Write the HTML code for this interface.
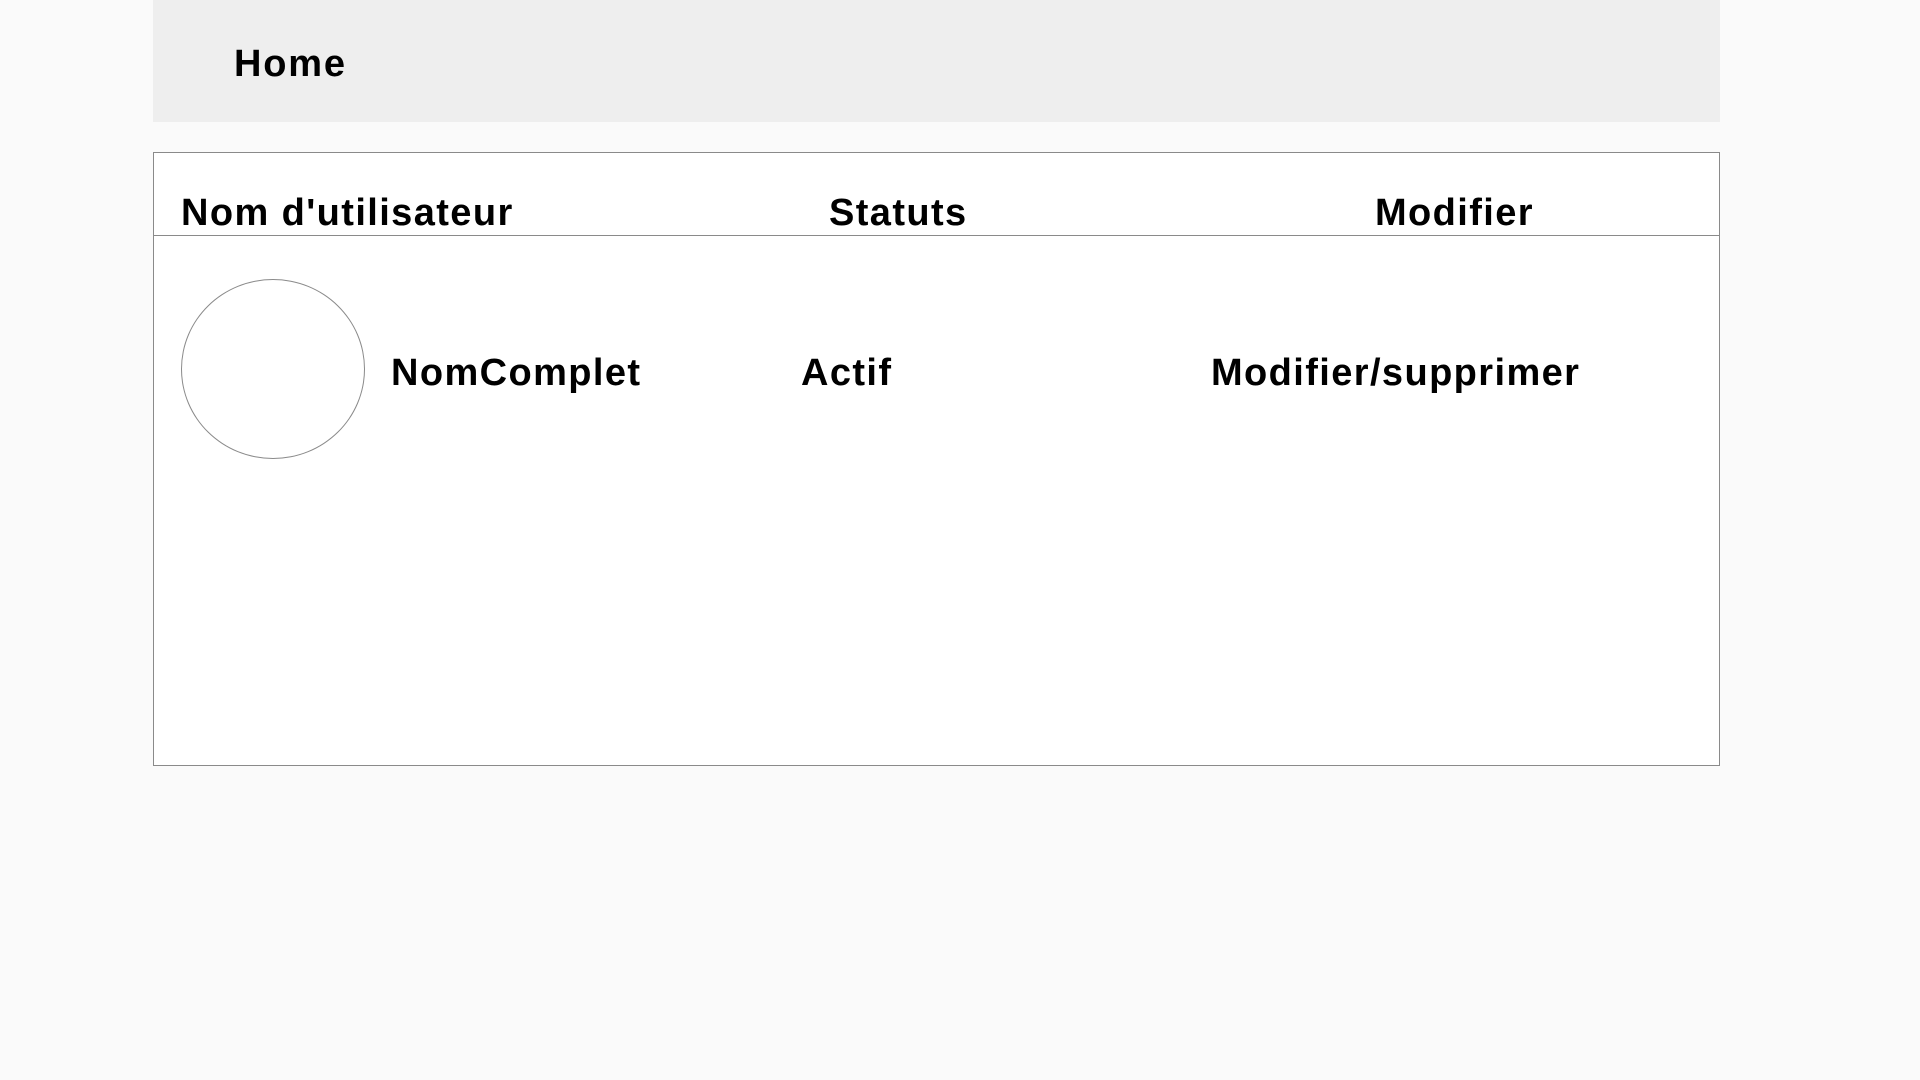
<!DOCTYPE html>
<html><head><meta charset="utf-8"><style>
html,body{margin:0;padding:0;width:1920px;height:1080px;background:#fafafa;overflow:hidden;font-family:"Liberation Sans",sans-serif;font-weight:bold;color:#000}
.hdr{position:absolute;left:153px;top:0;width:1567px;height:122px;background:#eeeeee}
.t{position:absolute;white-space:nowrap;line-height:1;letter-spacing:1.4px}
.box{position:absolute;left:153px;top:152px;width:1565px;height:612px;border:1px solid #8a8a8a;background:#fff}
.line{position:absolute;left:153px;top:235px;width:1567px;height:1px;background:#8a8a8a}
.circ{position:absolute;left:181px;top:279px;width:184px;height:180px;border:1px solid #8a8a8a;border-radius:50%;box-sizing:border-box}
</style></head><body>
<div class="hdr"></div>
<div class="t" style="left:234px;top:45px;font-size:38px;letter-spacing:1.8px">Home</div>
<div class="box"></div>
<div class="line"></div>
<div class="t" style="left:181px;top:194px;font-size:38px">Nom d'utilisateur</div>
<div class="t" style="left:829px;top:194px;font-size:38px">Statuts</div>
<div class="t" style="left:1375px;top:194px;font-size:38px">Modifier</div>
<div class="circ"></div>
<div class="t" style="left:391px;top:354px;font-size:38px">NomComplet</div>
<div class="t" style="left:801px;top:354px;font-size:38px">Actif</div>
<div class="t" style="left:1211px;top:354px;font-size:38px">Modifier/supprimer</div>
</body></html>
